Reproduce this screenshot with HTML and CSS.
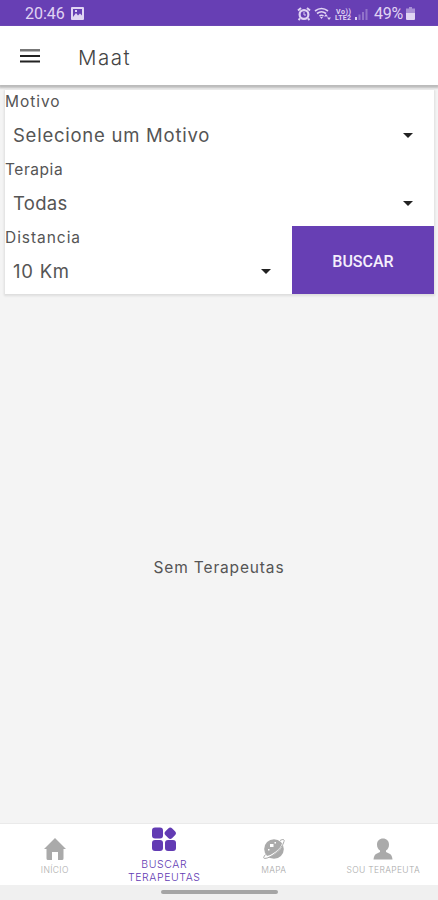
FILE: index.html
```
<!DOCTYPE html>
<html lang="pt-BR">
<head>
<meta charset="utf-8" />
<title>Maat</title>
<meta name="viewport" content="width=device-width,initial-scale=1" />
<link rel="stylesheet" href="styles.css">
</head>
<body>
	<div class="status-bar">
		<span class="clock">20:46</span>
		<svg width="13" height="13" viewBox="0 0 13 13">
			<path fill="currentColor" fill-rule="evenodd" d="M1 0h11a1 1 0 0 1 1 1v11a1 1 0 0 1-1 1H1a1 1 0 0 1-1-1V1a1 1 0 0 1 1-1zM2 2v8l3-4 2 2.500 2-2 2 2V2z"/>
			<path fill="currentColor" d="M4 3h2v2H4z"/>
		</svg>
		<div class="status-icons">
			<svg width="14" height="14" viewBox="0 0 14 14" fill="none" stroke="currentColor">
				<path stroke-width="2" d="M1 3.500L4 1M13 3.500L10 1M3 11.500L1.500 13M11 11.500l1.500 1.500"/>
				<circle cx="7" cy="7.500" r="4.400" stroke-width="2.200"/>
				<path d="M7 5v3h2"/>
			</svg>
			<svg width="18" height="14" viewBox="0 0 18 14" fill="none" stroke="currentColor">
				<path stroke-width="1.600" d="M1 4q6.500-5 13 0M3 6.500q4.500-3.500 9 0M5.500 9q2-1.500 4 0"/>
				<path fill="currentColor" stroke="none" d="M6 10h3l-1.500 2zM10 9.500l2-2.500 2 2.500zM13 10.500h4L15 13z"/>
			</svg>
			<svg class="volte" width="17" height="14" viewBox="0 0 17 14" fill="currentColor">
				<text x="1" y="6.500" textLength="15">Vo))</text>
				<text x="0" y="13" textLength="16">LTE2</text>
			</svg>
			<svg width="13" height="14" viewBox="0 0 13 14" fill="currentColor">
				<path d="M0 10h2v3H0z"/>
				<path opacity=".35" d="M3.500 7.500h2V13h-2zM7 5h2v8H7zM10.500 2h2v11h-2z"/>
			</svg>
			<span class="percent">49%</span>
			<svg width="9" height="13" viewBox="0 0 9 13" fill="currentColor">
				<path opacity=".55" d="M3 0h3v1.500h3V7H0V1.500h3z"/>
				<path d="M0 6h9v6a1 1 0 0 1-1 1H1a1 1 0 0 1-1-1z"/>
			</svg>
		</div>
	</div>
	<header class="app-bar">
		<svg width="20" height="16" viewBox="0 0 20 16">
			<path fill="#777" d="M0 1h20v2.500H0z"/>
			<path fill="#222" d="M0 7h20v2H0zM0 12.500h20v2H0z"/>
		</svg>
		<h1 class="title">Maat</h1>
	</header>
	<main class="content">
		<form class="filters">
			<div class="field">
				<span class="label">Motivo</span>
				<div class="select"><span class="value">Selecione um Motivo</span><i class="caret"></i></div>
			</div>
			<div class="field">
				<span class="label short">Terapia</span>
				<div class="select"><span class="value short">Todas</span><i class="caret"></i></div>
			</div>
			<div class="row">
				<div class="field">
					<span class="label">Distancia</span>
					<div class="select"><span class="value">10 Km</span><i class="caret"></i></div>
				</div>
				<button type="button" class="search">BUSCAR</button>
			</div>
		</form>
		<div class="empty"><p>Sem Terapeutas</p></div>
	</main>
	<nav class="tabs">
		<a class="tab">
			<svg width="22" height="22" viewBox="0 0 22 22" fill="currentColor">
				<path d="M11 0L22 11h-2.500v9.500q0 1.500-1.500 1.500h-4v-8H8v8H4q-1.500 0-1.500-1.500V11H0z"/>
			</svg>
			<span>INÍCIO</span>
		</a>
		<a class="tab active">
			<svg width="24" height="24" viewBox="0 0 24 24" fill="currentColor">
				<rect x="0" y="0.500" width="11" height="11" rx="3"/>
				<rect x="0" y="13" width="11" height="11" rx="3"/>
				<rect x="13" y="13" width="11" height="11" rx="3"/>
				<rect x="13.500" y="1.500" width="9.500" height="9.500" rx="2.800" transform="rotate(45 18.250 6.250)"/>
			</svg>
			<span>BUSCAR<br>TERAPEUTAS</span>
		</a>
		<a class="tab">
			<svg width="22" height="22" viewBox="0 0 22 22">
				<circle cx="11" cy="11" r="9.800" fill="currentColor"/>
				<path d="M19.500 6C18 11.500 9 18.500 2.500 19" fill="none" stroke="#fff" stroke-width="1.300"/>
				<path d="M17 2.500q5-2.500 4 1C19.500 10.500 8 20.500 1.500 20.500Q-.5 20 2.500 16.500" fill="none" stroke="currentColor" stroke-width="1"/>
				<path d="M7 6h3.500v3H7zM11.500 4H13v1.500h-1.500zM5 11h1.500v1.500H5z" fill="#fff"/>
			</svg>
			<span>MAPA</span>
		</a>
		<a class="tab">
			<svg width="20" height="22" viewBox="0 0 20 22" fill="currentColor">
				<path d="M10 .5C6.500.5 4 3 4 6.500q0 4 3 6V14l-4 2Q1 17 .5 21.500h19Q19 17 17 16l-4-2v-1.500q3-2 3-6C16 3 13.500.5 10 .5z"/>
			</svg>
			<span>SOU TERAPEUTA</span>
		</a>
	</nav>
	<div class="gesture-bar"><div class="handle"></div></div>
</body>
</html>
```

FILE: styles.css
```
* {
	box-sizing: border-box;
	margin: 0;
	padding: 0;
}
html,body {
	height: 100%;
}
body {
	display: flex;
	flex-direction: column;
	overflow: hidden;
	background: #f4f4f4;
	color: #555;
	font-family: Inter, "Liberation Sans", sans-serif;
	font-weight: 400;
}
svg {
	display: block;
	flex: none;
}
.status-bar {
	display: flex;
	align-items: center;
	height: 26px;
	padding: 1px 23px 0 25px;
	background: #673fb4;
	color: #e0d4f3;
	font: 400 16px/25px Roboto, sans-serif;
}
.clock {
	width: 46px;
}
.status-icons {
	display: flex;
	align-items: center;
	gap: 3px;
	margin-left: auto;
}
.volte {
	font: 700 7px Roboto, sans-serif;
}
.percent {
	width: 29px;
	margin-left: 3px;
	font-size: 16px;
	letter-spacing: -.2px;
}
.app-bar {
	display: flex;
	align-items: center;
	height: 59px;
	padding: 0 20px;
	background: #fff;
	box-shadow: 0 2px 2px 1px #bbb;
}
.title {
	margin: 3px 0 0 38px;
	font-size: 20.500px;
	font-weight: 350;
	letter-spacing: 1.500px;
	color: #444;
}
.content {
	display: flex;
	flex: 1;
	flex-direction: column;
	padding-top: 5px;
}
.filters {
	margin: 0 4px 0 5px;
	background: #fff;
	box-shadow: 0 1px 2px 1px #ddd;
}
.field {
	flex: 1;
	height: 68px;
}
.label {
	display: block;
	height: 23px;
	font-size: 15.500px;
	line-height: 23px;
	letter-spacing: .95px;
}
.select {
	display: flex;
	align-items: center;
	justify-content: space-between;
	height: 45px;
	padding: 0 21px 1px 8px;
	font-size: 18.500px;
}
.value {
	letter-spacing: .75px;
}
.label.short {
	letter-spacing: .55px;
}
.value.short {
	letter-spacing: .3px;
}
.caret {
	border: 5px solid transparent;
	border-top-color: #222;
	border-bottom: 0;
}
.row {
	display: flex;
}
.search {
	width: 142px;
	border: 0;
	padding-top: 2px;
	background: #673fb4;
	color: #f5effc;
	font: 500 16px Roboto, sans-serif;
}
.empty {
	display: flex;
	flex: 1;
	align-items: center;
	justify-content: center;
	padding-top: 18px;
	font-size: 15.500px;
	letter-spacing: .85px;
}
.tabs {
	display: grid;
	grid-template-columns: repeat(4, 1fr);
	height: 62px;
	border-top: 1px solid #eaeaea;
	background: #fff;
}
.tab {
	display: flex;
	flex-direction: column;
	align-items: center;
	padding-top: 14px;
	color: #aaa;
	font-size: 8.500px;
	font-weight: 300;
	line-height: 13px;
	letter-spacing: .35px;
	text-align: center;
}
.tab span {
	margin-top: 4px;
	white-space: nowrap;
}
.active {
	padding-top: 3px;
	color: #623bb3;
	font-size: 10.500px;
	letter-spacing: .6px;
}
.active span {
	margin-top: 7px;
}
.gesture-bar {
	display: flex;
	justify-content: center;
	height: 15px;
	padding-top: 5px;
	background: #f0f0f0;
}
.handle {
	width: 117px;
	height: 4px;
	border-radius: 2px;
	background: #a5a5a5;
}
```
